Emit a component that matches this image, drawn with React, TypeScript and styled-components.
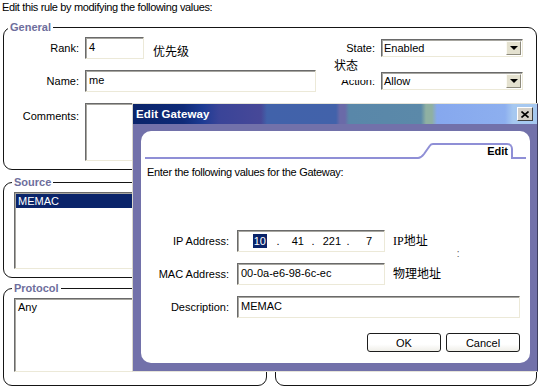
import React from "react";
import styled, { createGlobalStyle, css } from "styled-components";

const GlobalStyle = createGlobalStyle`
  html, body {
    margin: 0;
    padding: 0;
    background: #fff;
  }
  body {
    font-family: "Liberation Sans", Arial, "Noto Sans CJK SC", sans-serif;
    font-size: 11px;
    color: #000;
  }
  #root {
    width: 544px;
    height: 389px;
    overflow: hidden;
  }
`;

// sunken win2k style edge
const sunken = css`
  box-sizing: border-box;
  background: #fff;
  border: 1px solid;
  border-color: #6a6a6a #ece9d8 #ece9d8 #6a6a6a;
  box-shadow: inset 1px 1px 0 #a7a6a0;
`;

const Page = styled.div`
  position: relative;
  width: 544px;
  height: 389px;
  box-sizing: border-box;
  padding: 1px 7px 0 3px;
  display: flex;
  flex-direction: column;
`;

const Intro = styled.div`
  margin-left: -1px;
  line-height: 13px;
  height: 13px;
  margin-bottom: 7px;
  letter-spacing: -0.35px;
`;

const Group = styled.fieldset<{ $height: number; $wide?: boolean }>`
  margin: 0;
  min-width: 0;
  box-sizing: border-box;
  height: ${(p) => p.$height}px;
  border: 1px solid #151515;
  border-radius: 9px;
  padding: 3px 13px 0 ${(p) => (p.$wide ? 6 : 10)}px;
`;

const Legend = styled.legend`
  padding: 0 2px;
  margin-left: -2px;
  font-weight: bold;
  font-size: 11px;
  line-height: 13px;
  color: #6e6e9c;
`;

const GeneralBody = styled.div`
  display: flex;
  justify-content: space-between;
`;

const LeftForm = styled.div`
  display: grid;
  grid-template-columns: 69px 231px;
  grid-template-rows: 22px 22px 58px;
  column-gap: 6px;
  row-gap: 11px;
`;

const RightForm = styled.div`
  display: grid;
  grid-template-columns: auto 142px;
  grid-template-rows: 18px 18px;
  column-gap: 6px;
  row-gap: 15px;
  margin-top: 2px;
  align-items: center;
`;

const Label = styled.div<{ $top?: boolean }>`
  position: relative;
  text-align: right;
  align-self: ${(p) => (p.$top ? "start" : "center")};
  margin-top: ${(p) => (p.$top ? 7 : 0)}px;
  white-space: nowrap;
`;

const TextBox = styled.div<{ $width?: number }>`
  ${sunken};
  width: ${(p) => (p.$width ? `${p.$width}px` : "100%")};
  height: 100%;
  padding: 2px 3px;
  line-height: 14px;
  white-space: nowrap;
  overflow: hidden;
`;

const FieldWithNote = styled.div`
  display: flex;
  align-items: flex-end;
  gap: 9px;
`;

const CjkNote = styled.span`
  font-family: "Liberation Serif", "Noto Sans CJK SC", serif;
  font-size: 12px;
  line-height: 14px;
  white-space: nowrap;
`;

const StateNote = styled(CjkNote)`
  position: absolute;
  top: -17px;
  right: -1px;
  width: 44px;
  height: 22px;
  box-sizing: border-box;
  padding: 1px 0 0 2px;
  background: #fff;
  text-align: left;
`;

const DropDown = styled.div`
  ${sunken};
  height: 18px;
  display: flex;
  align-items: center;
  padding-left: 2px;
  line-height: 14px;
`;

const DropButton = styled.div`
  margin-left: auto;
  margin-right: 1px;
  width: 15px;
  height: 14px;
  box-sizing: border-box;
  background: #e4e1cf;
  border: 1px solid;
  border-color: #fbfaf4 #8d8a7c #8d8a7c #fbfaf4;
  display: flex;
  align-items: center;
  justify-content: center;

  &::after {
    content: "";
    border-left: 4px solid transparent;
    border-right: 4px solid transparent;
    border-top: 4px solid #000;
  }
`;

const Lower = styled.div`
  display: grid;
  grid-template-columns: 264px 1fr;
  column-gap: 8px;
  row-gap: 4px;
  margin-top: 6px;
`;

const ListBox = styled.div<{ $height: number }>`
  ${sunken};
  width: 158px;
  height: ${(p) => p.$height}px;
  padding: 1px;
  line-height: 14px;
`;

const ListItem = styled.div<{ $selected?: boolean }>`
  padding-left: 2px;
  height: 14px;
  background: ${(p) => (p.$selected ? "#0a246a" : "transparent")};
  color: ${(p) => (p.$selected ? "#fff" : "#000")};
`;

/* ---------- dialog ---------- */

const Dialog = styled.div`
  position: absolute;
  left: 132px;
  top: 103px;
  width: 406px;
  height: 269px;
  box-sizing: border-box;
  background: #7271aa;
  border: 1px solid;
  border-color: #e6e4da #3e3e60 #e6e4da #d8d6cc;
  display: flex;
  flex-direction: column;
`;

const TitleBar = styled.div`
  height: 20px;
  flex: none;
  display: flex;
  align-items: center;
  justify-content: space-between;
  padding: 0 4px 0 3px;
  background: linear-gradient(
    90deg,
    #0a246a 0px,
    #0e2a78 50px,
    #1d3b94 70px,
    #3a4498 86px,
    #474898 128px,
    #4162aa 134px,
    #4262aa 203px,
    #6a6aa8 207px,
    #6a6aa8 212px,
    #5987a9 216px,
    #5b89a9 288px,
    #8fb0a2 293px,
    #8fb0a2 299px,
    #86a8ee 304px,
    #8dafef 372px,
    #a6c8f0 380px
  );
`;

const Title = styled.span`
  color: #fff;
  font-weight: bold;
  font-size: 11.5px;
  letter-spacing: 0.1px;
`;

const CloseButton = styled.div`
  width: 16px;
  height: 14px;
  box-sizing: border-box;
  background: #d4d0c8;
  border: 1px solid;
  border-color: #fff #404040 #404040 #fff;
  display: flex;
  align-items: center;
  justify-content: center;
`;

const Panel = styled.div`
  flex: 1;
  margin: 7px 7px 8px 8px;
  background: #fff;
  border-radius: 10px;
  padding: 0 4px;
  display: flex;
  flex-direction: column;
`;

const TabBar = styled.div`
  height: 28px;
  display: flex;
  align-items: flex-end;
  color: #8f8fd6;
`;

const TabLine = styled.div<{ $width?: number }>`
  flex: ${(p) => (p.$width ? "none" : "1")};
  width: ${(p) => (p.$width ? `${p.$width}px` : "auto")};
  height: 2px;
  background: currentColor;
`;

const Tab = styled.div`
  width: 80px;
  height: 16px;
  box-sizing: border-box;
  border-top: 2px solid #8f8fd6;
  border-right: 2px solid #8f8fd6;
  border-top-right-radius: 6px;
  padding: 0 3px 0 0;
  text-align: right;
  line-height: 13px;
  font-weight: bold;
  color: #000;
`;

const Prompt = styled.div`
  margin: 7px 0 0 2px;
  line-height: 13px;
  letter-spacing: -0.3px;
`;

const GatewayForm = styled.div`
  display: grid;
  grid-template-columns: 84px 148px 127px;
  grid-template-rows: 22px 22px 22px;
  column-gap: 8px;
  row-gap: 11px;
  margin-top: 51px;
  align-items: center;
`;

const IpBox = styled.div`
  ${sunken};
  height: 22px;
  display: flex;
  align-items: center;
  padding-left: 2px;
`;

const Octet = styled.span<{ $w: number }>`
  width: ${(p) => p.$w}px;
  text-align: right;
  flex: none;
`;

const Dot = styled.span<{ $w: number }>`
  width: ${(p) => p.$w}px;
  text-align: center;
  flex: none;
`;

const Selected = styled.span`
  background: #0a246a;
  color: #fff;
  padding: 1px 1px;
`;

const NoteCell = styled.div`
  display: flex;
  align-items: center;
`;

const Speck = styled.span`
  margin-left: 29px;
  color: #555;
  font-size: 10px;
  transform: translateY(12px);
`;

const WideCell = styled.div`
  grid-column: 2 / 4;
  height: 100%;
`;

const Buttons = styled.div`
  display: flex;
  justify-content: flex-end;
  gap: 5px;
  margin-top: 15px;
  padding-right: 6px;
`;

const Button = styled.div`
  width: 74px;
  height: 19px;
  box-sizing: border-box;
  border: 1px solid #1d1d1d;
  border-radius: 3px;
  background: linear-gradient(#ffffff, #ffffff 60%, #f0efe9);
  display: flex;
  align-items: center;
  justify-content: center;
`;

const octets = [
  { w: 27, text: "10", selected: true },
  { w: 15, text: "41" },
  { w: 19, text: "221" },
  { w: 17, text: "7" },
];
const dots = [22, 18, 14];

export default function App() {
  return (
    <>
      <GlobalStyle />
      <Page>
        <Intro>Edit this rule by modifying the following values:</Intro>

        <Group $height={149} $wide>
          <Legend>General</Legend>
          <GeneralBody>
            <LeftForm>
              <Label>Rank:</Label>
              <FieldWithNote>
                <TextBox $width={59}>4</TextBox>
                <CjkNote>优先级</CjkNote>
              </FieldWithNote>
              <Label>Name:</Label>
              <TextBox>me</TextBox>
              <Label $top>Comments:</Label>
              <TextBox />
            </LeftForm>
            <RightForm>
              <Label>State:</Label>
              <DropDown>
                Enabled
                <DropButton />
              </DropDown>
              <Label>
                Action:
                <StateNote>状态</StateNote>
              </Label>
              <DropDown>
                Allow
                <DropButton />
              </DropDown>
            </RightForm>
          </GeneralBody>
        </Group>

        <Lower>
          <Group $height={102}>
            <Legend>Source</Legend>
            <ListBox $height={77}>
              <ListItem $selected>MEMAC</ListItem>
            </ListBox>
          </Group>
          <Group $height={102}>
            <ListBox $height={77} />
          </Group>
          <Group $height={104}>
            <Legend>Protocol</Legend>
            <ListBox $height={74}>
              <ListItem>Any</ListItem>
            </ListBox>
          </Group>
          <Group $height={104}>
            <ListBox $height={74} />
          </Group>
        </Lower>

        <Dialog>
          <TitleBar>
            <Title>Edit Gateway</Title>
            <CloseButton>
              <svg width="8" height="7" viewBox="0 0 8 7">
                <path d="M0.5 0.5 L7.5 6.5 M7.5 0.5 L0.5 6.5" stroke="#000" strokeWidth="1.6" />
              </svg>
            </CloseButton>
          </TitleBar>
          <Panel>
            <TabBar>
              <TabLine />
              <svg width="15" height="16" viewBox="0 0 15 16">
                <path d="M0 15 Q3 15 6 11 L12 2.5 Q13 1 15 1" fill="none" stroke="#8f8fd6" strokeWidth="2" />
              </svg>
              <Tab>Edit</Tab>
              <TabLine $width={13} />
            </TabBar>
            <Prompt>Enter the following values for the Gateway:</Prompt>
            <GatewayForm>
              <Label>IP Address:</Label>
              <IpBox>
                {octets.map((o, i) => (
                  <React.Fragment key={i}>
                    <Octet $w={o.w}>{o.selected ? <Selected>{o.text}</Selected> : o.text}</Octet>
                    {i < dots.length && <Dot $w={dots[i]}>.</Dot>}
                  </React.Fragment>
                ))}
              </IpBox>
              <NoteCell>
                <CjkNote>IP地址</CjkNote>
                <Speck>:</Speck>
              </NoteCell>
              <Label>MAC Address:</Label>
              <TextBox>00-0a-e6-98-6c-ec</TextBox>
              <NoteCell>
                <CjkNote>物理地址</CjkNote>
              </NoteCell>
              <Label>Description:</Label>
              <WideCell>
                <TextBox>MEMAC</TextBox>
              </WideCell>
            </GatewayForm>
            <Buttons>
              <Button>OK</Button>
              <Button>Cancel</Button>
            </Buttons>
          </Panel>
        </Dialog>
      </Page>
    </>
  );
}
